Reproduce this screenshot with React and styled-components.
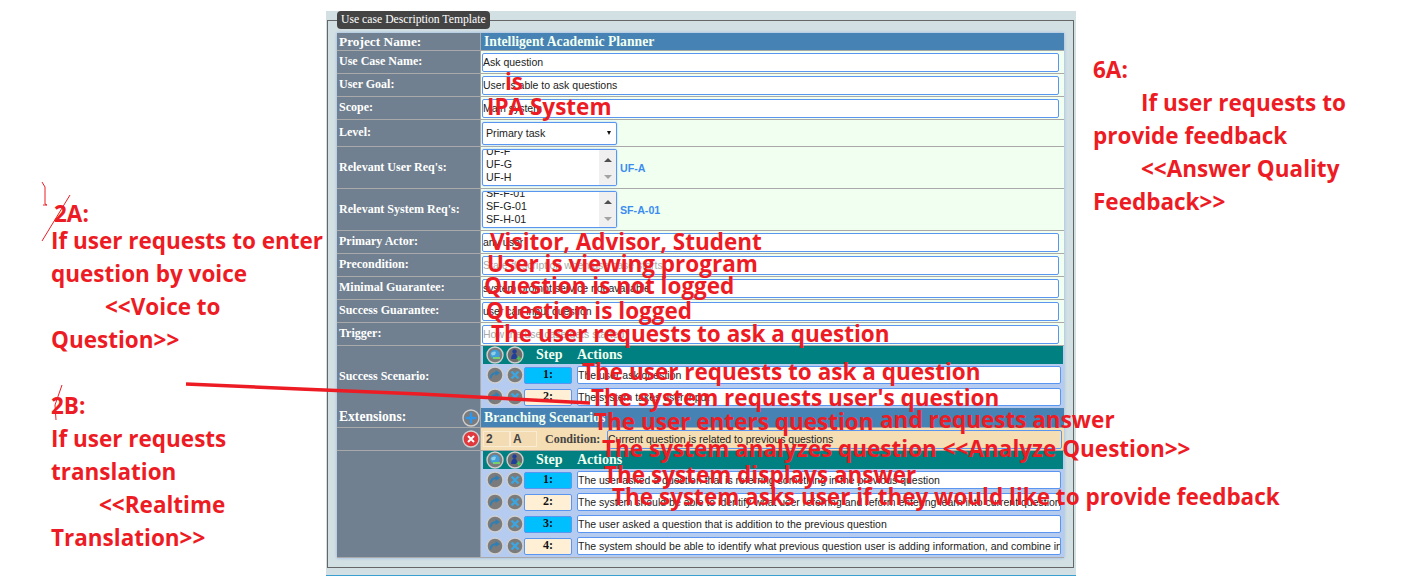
import React from 'react'
import styled, { createGlobalStyle, css } from 'styled-components'

const GlobalStyle = createGlobalStyle`
  html, body {
    margin: 0;
    padding: 0;
    background: #fff;
  }
  #root {
    position: relative;
    width: 1404px;
    height: 578px;
    overflow: hidden;
  }
`

const Panel = styled.div`
  width: 750px;
  height: 565px;
  margin: 11px 0 0 326px;
  padding-left: 1px;
  box-sizing: border-box;
  background: #d3e0e3;
  border-bottom: 1px solid #3ba0d0;
`

const Fieldset = styled.fieldset`
  margin: 0;
  width: 747px;
  height: 557px;
  box-sizing: border-box;
  padding: 4px 9px 0;
  border: 1px solid #666;
  min-width: 0;
`

const Legend = styled.legend`
  height: 18px;
  padding: 0 4px;
  margin-left: 0;
  box-sizing: border-box;
  background: #444;
  border-radius: 4px;
  color: #fff;
  font: 11.7px/18px 'Liberation Serif', serif;
`

const Table = styled.div`
  width: 727px;
  display: flex;
  flex-direction: column;
  box-shadow: 0 0 3px #8fb4e8;
`

const Row = styled.div`
  display: grid;
  grid-template-columns: 143px 1fr;
  column-gap: 1px;
  height: ${p => p.$h}px;
  border-bottom: 1px solid #a9a9a9;
  background: #a9a9a9;
  box-sizing: content-box;
`

const Label = styled.div`
  background: #708090;
  color: #fff;
  font: bold 12px 'Liberation Serif', serif;
  padding: 0 0 ${p => (p.$tall ? 0 : 2)}px 2px;
  display: flex;
  align-items: ${p => (p.$top ? 'flex-start' : 'center')};
  justify-content: space-between;
  ${p => p.$big && css`font-size: 13.33px;`}
  ${p => p.$top && css`padding-top: 1px; font-size: 13.6px;`}
`

const Value = styled.div`
  background: ${p => p.$bg || '#f0fff0'};
  display: flex;
  align-items: center;
  min-width: 0;
  padding-left: ${p => p.$pad ?? 1}px;
`

const Heading = styled(Value)`
  background: #4682b4;
  color: #f0fff0;
  font: bold 13.7px 'Liberation Serif', serif;
  padding-left: 3px;
`

const TextInput = styled.input`
  display: block;
  width: ${p => p.$w || 577}px;
  height: ${p => p.$hgt || 19}px;
  box-sizing: border-box;
  padding: 0;
  margin: 0;
  border: 1px solid #5a96f0;
  border-radius: 2px;
  background: ${p => p.$bg || '#fff'};
  color: #222;
  font: 10.5px 'Liberation Sans', Arial, sans-serif;
  outline: none;
  &::placeholder {
    color: #aaa;
    opacity: 1;
  }
`

const SelectBox = styled.div`
  width: 135px;
  height: 23px;
  box-sizing: border-box;
  border: 1px solid #5a96f0;
  border-radius: 2px;
  background: #fff;
  color: #222;
  font: 10.67px 'Liberation Sans', Arial, sans-serif;
  padding: 0 5px 0 3px;
  display: flex;
  align-items: center;
  justify-content: space-between;
  box-shadow: 0 0 2px #9cbcf0;
`

const Caret = styled.span`
  width: 0;
  height: 0;
  border-left: 2.5px solid transparent;
  border-right: 2.5px solid transparent;
  border-top: 4px solid #111;
`

const ListBox = styled.div`
  width: 135px;
  height: 37px;
  box-sizing: border-box;
  border: 1px solid #5a96f0;
  border-radius: 2px;
  background: #fff;
  display: flex;
  overflow: hidden;
  box-shadow: 0 0 2px #9cbcf0;
`

const ListItems = styled.div`
  flex: 1;
  color: #222;
  font: 10.67px/13px 'Liberation Sans', Arial, sans-serif;
  padding-left: 3px;
  margin-top: -5px;
`

const ScrollTrack = styled.div`
  width: 17px;
  background: #f0f0f0;
  display: flex;
  flex-direction: column;
  align-items: center;
  justify-content: space-between;
  padding: 8px 0 6px;
`

const Arrow = styled.span`
  width: 0;
  height: 0;
  border-left: 4px solid transparent;
  border-right: 4px solid transparent;
  ${p => (p.$down
    ? css`border-top: 4px solid #a3a3a3;`
    : css`border-bottom: 4px solid #505050;`)}
`

const Chosen = styled.span`
  color: #3c8cf0;
  font: bold 10.67px 'Liberation Sans', Arial, sans-serif;
  margin-left: 3px;
`

const Scenario = styled.div`
  background: #b5ccf0;
  padding: 0 1px 0 2px;
  display: flex;
  flex-direction: column;
  min-width: 0;
`

const StepHeader = styled.div`
  height: 18px;
  background: #008080;
  color: #f0fff0;
  font: bold 14px/18px 'Liberation Serif', serif;
  display: flex;
  align-items: center;
  gap: 2px;
  padding-left: 3px;
`

const StepCol = styled.span`
  margin-left: 10px;
  width: 39px;
`

const StepRow = styled.div`
  height: 22px;
  display: flex;
  align-items: center;
  gap: 2px;
  padding-left: 3px;
`

const StepNumber = styled.div`
  width: 48px;
  height: 17px;
  margin: 0 3px 0 -2px;
  box-sizing: border-box;
  border: 1px solid #5a96f0;
  border-radius: 2px;
  background: ${p => (p.$odd ? '#00bfff' : '#ffefd5')};
  color: #111;
  font: bold 12px/13px 'Liberation Serif', serif;
  text-align: center;
`

const CaseBox = styled.div`
  width: 27px;
  height: 16px;
  box-sizing: border-box;
  border: 1px solid #f8ecd4;
  background: #f3dcb3;
  color: #444;
  font: bold 12px/14px 'Liberation Sans', Arial, sans-serif;
  padding-left: 2px;
`

const ConditionLabel = styled.span`
  color: #444;
  font: bold 12px 'Liberation Serif', serif;
  margin-left: 8px;
  width: 62px;
`

const Round = styled.svg`
  display: block;
  flex: none;
  width: 18px;
  height: 18px;
`

const Button = ({ children, fill = '#7b7b7b' }) => (
  <Round viewBox="0 0 18 18">
    <circle cx="9" cy="9" r="8" fill={fill} stroke="#cfcfcf" strokeWidth="1.4" />
    {children}
  </Round>
)

const GlobeButton = () => (
  <Button>
    <circle cx="9" cy="8.5" r="4.8" fill="#3f9fdc" />
    <path d="M5 7q3-2.5 5-1l-1 3-3 .5z" fill="#8fd0e8" />
    <path d="M7 11h7v2H7z" fill="#7bd06b" />
  </Button>
)

const UserButton = () => (
  <Button fill="#6c6c6c">
    <circle cx="8.5" cy="5.5" r="2.2" fill="#22409a" />
    <path d="M5 13q.5-5.5 3.5-5.5t2.5 5.5z" fill="#22409a" />
    <path d="M10.5 12.5h4.5M12.8 10.2v4.6" stroke="#4ec04e" strokeWidth="1.6" />
  </Button>
)

const RedoButton = () => (
  <Button>
    <path d="M4.5 12.5q.5-5.5 6-5.5" fill="none" stroke="#2f7fb5" strokeWidth="1.8" />
    <path d="M9.5 4l4.5 3-4.5 3z" fill="#2f7fb5" />
  </Button>
)

const CrossButton = () => (
  <Button>
    <path d="M5.5 5.5l7 7M12.5 5.5l-7 7" stroke="#3ba6e2" strokeWidth="2.4" />
  </Button>
)

const PlusButton = () => (
  <Button>
    <path d="M3.5 9h11M9 3.5v11" stroke="#2f96ee" strokeWidth="2.4" />
  </Button>
)

const RemoveButton = () => (
  <Button fill="#e0383c">
    <path d="M6 6l6 6M12 6l-6 6" stroke="#fff" strokeWidth="2" />
  </Button>
)

const Note = styled.div`
  position: absolute;
  left: ${p => p.$x}px;
  top: ${p => p.$y}px;
  color: #ed1c24;
  font: 700 22.5px/33px 'Open Sans', sans-serif;
  white-space: nowrap;
  pointer-events: none;
`

const Ink = styled.svg`
  position: absolute;
  left: 0;
  top: 0;
  width: 1404px;
  height: 578px;
  pointer-events: none;
`

const fields = [
  { label: 'Use Case Name:', value: 'Ask question' },
  { label: 'User Goal:', value: 'User is able to ask questions' },
  { label: 'Scope:', value: 'Main system' },
]

const actors = [
  { label: 'Primary Actor:', value: 'any user' },
  { label: 'Precondition:', hint: 'State description when use case starts' },
  { label: 'Minimal Guarantee:', value: 'system prompt service not available' },
  { label: 'Success Guarantee:', value: 'user can input question' },
  { label: 'Trigger:', hint: 'How the use case gets started' },
]

const successSteps = ['The user ask question', 'The system takes user input']

const branchSteps = [
  'The user asked a question that is referring something in the previous question',
  'The system should be able to identify what user referring and reform entering learn into current question',
  'The user asked a question that is addition to the previous question',
  'The system should be able to identify what previous question user is adding information, and combine in',
]

const notes = [
  { x: 505, y: 65, text: 'is' },
  { x: 487, y: 90, text: 'IPA System' },
  { x: 490, y: 225, text: 'Visitor, Advisor, Student' },
  { x: 487, y: 247, text: 'User is viewing program' },
  { x: 484, y: 269, text: 'Question is not logged' },
  { x: 486, y: 294, text: 'Question is logged' },
  { x: 491, y: 317, text: 'The user requests to ask a question' },
  { x: 582, y: 355, text: 'The user requests to ask a question' },
  { x: 591, y: 381, text: "The system requests user's question" },
  { x: 594, y: 405, text: 'The user enters question' },
  { x: 880, y: 403, text: 'and requests answer' },
  { x: 602, y: 432, text: 'The system analyzes question <<Analyze Question>>' },
  { x: 604, y: 458, text: 'The system displays answer' },
  { x: 612, y: 480, text: 'The system asks user if they would like to provide feedback' },
  { x: 1093, y: 53, text: '6A:' },
  { x: 1141, y: 86, text: 'If user requests to' },
  { x: 1093, y: 119, text: 'provide feedback' },
  { x: 1141, y: 152, text: '<<Answer Quality' },
  { x: 1093, y: 185, text: 'Feedback>>' },
  { x: 54, y: 197, text: '2A:' },
  { x: 51, y: 224, text: 'If user requests to enter' },
  { x: 51, y: 257, text: 'question by voice' },
  { x: 105, y: 290, text: '<<Voice to' },
  { x: 51, y: 323, text: 'Question>>' },
  { x: 51, y: 389, text: '2B:' },
  { x: 51, y: 422, text: 'If user requests' },
  { x: 51, y: 455, text: 'translation' },
  { x: 99, y: 488, text: '<<Realtime' },
  { x: 51, y: 521, text: 'Translation>>' },
]

const Steps = ({ items }) => (
  <>
    <StepHeader>
      <GlobeButton />
      <UserButton />
      <StepCol>Step</StepCol>
      <span>Actions</span>
    </StepHeader>
    {items.map((text, i) => (
      <StepRow key={i}>
        <RedoButton />
        <CrossButton />
        <StepNumber $odd={i % 2 === 0}>{i + 1}:</StepNumber>
        <TextInput $w={484} $hgt={18} defaultValue={text} readOnly />
      </StepRow>
    ))}
  </>
)

const App = () => (
  <>
    <GlobalStyle />
    <Panel>
      <Fieldset>
        <Legend>Use case Description Template</Legend>
        <Table>
          <Row $h={17}>
            <Label $big $tall>Project Name:</Label>
            <Heading>Intelligent Academic Planner</Heading>
          </Row>
          {fields.map(f => (
            <Row $h={22} key={f.label}>
              <Label>{f.label}</Label>
              <Value><TextInput defaultValue={f.value} readOnly /></Value>
            </Row>
          ))}
          <Row $h={26}>
            <Label>Level:</Label>
            <Value>
              <SelectBox>Primary task<Caret /></SelectBox>
            </Value>
          </Row>
          <Row $h={41}>
            <Label $tall>Relevant User Req's:</Label>
            <Value>
              <ListBox>
                <ListItems>UF-F<br />UF-G<br />UF-H</ListItems>
                <ScrollTrack><Arrow /><Arrow $down /></ScrollTrack>
              </ListBox>
              <Chosen>UF-A</Chosen>
            </Value>
          </Row>
          <Row $h={41}>
            <Label $tall>Relevant System Req's:</Label>
            <Value>
              <ListBox>
                <ListItems>SF-F-01<br />SF-G-01<br />SF-H-01</ListItems>
                <ScrollTrack><Arrow /><Arrow $down /></ScrollTrack>
              </ListBox>
              <Chosen>SF-A-01</Chosen>
            </Value>
          </Row>
          {actors.map(f => (
            <Row $h={22} key={f.label}>
              <Label>{f.label}</Label>
              <Value>
                <TextInput defaultValue={f.value} placeholder={f.hint} readOnly />
              </Value>
            </Row>
          ))}
          <Row $h={61}>
            <Label>Success Scenario:</Label>
            <Scenario><Steps items={successSteps} /></Scenario>
          </Row>
          <Row $h={19}>
            <Label $top $tall>Extensions:<PlusButton /></Label>
            <Heading>Branching Scenarios</Heading>
          </Row>
          <Row $h={22}>
            <Label $tall>&nbsp;<RemoveButton /></Label>
            <Value $bg="#f5deb3" $pad={2}>
              <CaseBox>2</CaseBox>
              <CaseBox>A</CaseBox>
              <ConditionLabel>Condition:</ConditionLabel>
              <TextInput
                $w={455}
                $bg="#f5deb3"
                defaultValue="Current question is related to previous questions"
                readOnly
              />
            </Value>
          </Row>
          <Row $h={106}>
            <Label />
            <Scenario><Steps items={branchSteps} /></Scenario>
          </Row>
        </Table>
      </Fieldset>
    </Panel>
    <Ink viewBox="0 0 1404 578">
      <path d="M186 384L300 389L420 394L590 403" fill="none" stroke="#ed1c24" strokeWidth="3.5" />
      <path d="M70 195L42 241M42 182L45 187L45 204L47 205L43 205" fill="none" stroke="#ed1c24" strokeWidth="1" />
      <path d="M62 385L55 405L56 420" fill="none" stroke="#ed1c24" strokeWidth="1" />
    </Ink>
    {notes.map((n, i) => (
      <Note key={i} $x={n.x} $y={n.y}>{n.text}</Note>
    ))}
  </>
)

export default App
